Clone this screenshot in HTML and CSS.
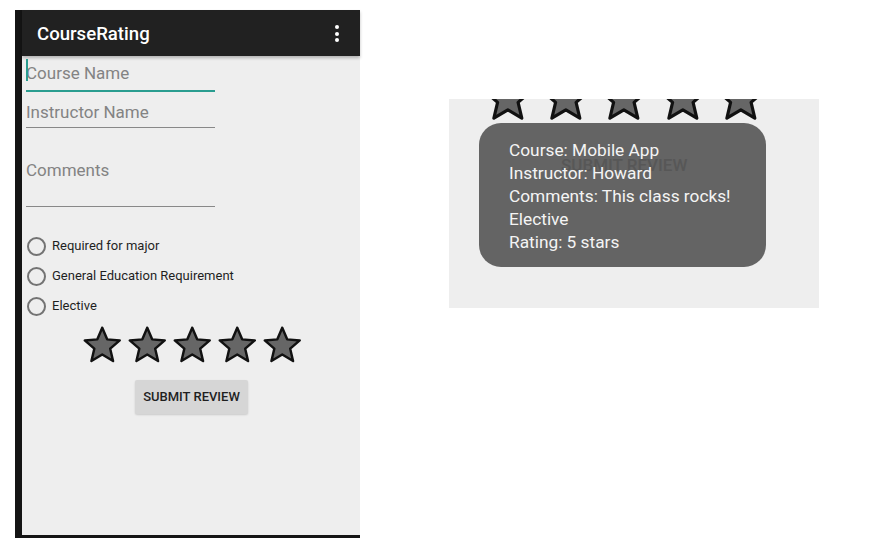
FILE: index.html
```html
<!DOCTYPE html>
<html lang="en">
<head>
  <meta charset="UTF-8" />
  <title>CourseRating</title>
  <link rel="stylesheet" href="styles.css">
</head>
<body>
  <div class="phone">
    <div class="appbar">
      <span class="app-title">CourseRating</span>
      <span class="kebab"><i></i><i></i><i></i></span>
    </div>
    <div class="content">
      <div class="field field-active"><span class="cursor"></span>Course Name</div>
      <div class="field field-second">Instructor Name</div>
      <div class="field field-comments">Comments</div>

      <div class="radios">
        <label class="radio"><span class="circle"></span>Required for major</label>
        <label class="radio"><span class="circle"></span>General Education Requirement</label>
        <label class="radio"><span class="circle"></span>Elective</label>
      </div>

      <div class="stars">
        <svg class="star" viewBox="1 1 22 21"><path d="M12 17.27L18.18 21l-1.64-7.03L22 9.24l-7.19-.61L12 2 9.19 8.63 2 9.24l5.46 4.73L5.82 21z"/></svg>
        <svg class="star" viewBox="1 1 22 21"><path d="M12 17.27L18.18 21l-1.64-7.03L22 9.24l-7.19-.61L12 2 9.19 8.63 2 9.24l5.46 4.73L5.82 21z"/></svg>
        <svg class="star" viewBox="1 1 22 21"><path d="M12 17.27L18.18 21l-1.64-7.03L22 9.24l-7.19-.61L12 2 9.19 8.63 2 9.24l5.46 4.73L5.82 21z"/></svg>
        <svg class="star" viewBox="1 1 22 21"><path d="M12 17.27L18.18 21l-1.64-7.03L22 9.24l-7.19-.61L12 2 9.19 8.63 2 9.24l5.46 4.73L5.82 21z"/></svg>
        <svg class="star" viewBox="1 1 22 21"><path d="M12 17.27L18.18 21l-1.64-7.03L22 9.24l-7.19-.61L12 2 9.19 8.63 2 9.24l5.46 4.73L5.82 21z"/></svg>
      </div>

      <div class="btn-row">
        <button class="submit-btn">SUBMIT REVIEW</button>
      </div>
    </div>
  </div>

  <div class="result">
    <div class="stars stars-big">
      <svg class="star" viewBox="1 1 22 21"><path d="M12 17.27L18.18 21l-1.64-7.03L22 9.24l-7.19-.61L12 2 9.19 8.63 2 9.24l5.46 4.73L5.82 21z"/></svg>
      <svg class="star" viewBox="1 1 22 21"><path d="M12 17.27L18.18 21l-1.64-7.03L22 9.24l-7.19-.61L12 2 9.19 8.63 2 9.24l5.46 4.73L5.82 21z"/></svg>
      <svg class="star" viewBox="1 1 22 21"><path d="M12 17.27L18.18 21l-1.64-7.03L22 9.24l-7.19-.61L12 2 9.19 8.63 2 9.24l5.46 4.73L5.82 21z"/></svg>
      <svg class="star" viewBox="1 1 22 21"><path d="M12 17.27L18.18 21l-1.64-7.03L22 9.24l-7.19-.61L12 2 9.19 8.63 2 9.24l5.46 4.73L5.82 21z"/></svg>
      <svg class="star" viewBox="1 1 22 21"><path d="M12 17.27L18.18 21l-1.64-7.03L22 9.24l-7.19-.61L12 2 9.19 8.63 2 9.24l5.46 4.73L5.82 21z"/></svg>
    </div>

    <div class="toast">
      <span class="ghost">SUBMIT REVIEW</span>
      <div class="toast-text">
        Course: Mobile App<br>
        Instructor: Howard<br>
        Comments: This class rocks!<br>
        Elective<br>
        Rating: 5 stars
      </div>
    </div>
  </div>
</body>
</html>
```

FILE: styles.css
```css
body {
  margin: 0;
  padding: 10px 0 0 15px;
  background: #ffffff;
  font-family: Roboto, "Liberation Sans", sans-serif;
  display: flex;
  align-items: flex-start;
}

.phone {
  width: 345px;
  height: 528px;
  box-sizing: border-box;
  border-left: 7px solid #141414;
  border-bottom: 3px solid #141414;
  background: #eeeeee;
  display: flex;
  flex-direction: column;
}

.appbar {
  height: 46px;
  flex-shrink: 0;
  background: #212121;
  display: flex;
  align-items: center;
  justify-content: space-between;
  padding: 0 21px 0 15px;
  box-shadow: 0 2px 3px rgba(0, 0, 0, 0.25);
  position: relative;
}

.app-title {
  color: #ffffff;
  font-size: 18.6px;
  font-weight: 500;
  margin-top: 2px;
}

.kebab {
  display: flex;
  flex-direction: column;
  gap: 2.5px;
  margin-top: 1px;
}

.kebab i {
  width: 4px;
  height: 4px;
  border-radius: 50%;
  background: #ffffff;
}

.content {
  flex: 1;
  padding-left: 4px;
}

.field {
  width: 189px;
  font-size: 17px;
  line-height: 20px;
  color: #838383;
  border-bottom: 1px solid #888888;
  position: relative;
}

.field-active {
  padding: 7px 0 7px;
  border-bottom: 2px solid #2a9d90;
}

.cursor {
  position: absolute;
  left: 0;
  top: 3px;
  width: 2px;
  height: 22px;
  background: #2a9d90;
}

.field-second {
  padding: 10px 0 5px;
}

.field-comments {
  padding: 32px 0 26px;
}

.radios {
  margin-top: 23px;
  display: flex;
  flex-direction: column;
}

.radio {
  height: 30px;
  display: flex;
  align-items: center;
  font-size: 13px;
  color: #1f1f1f;
}

.circle {
  width: 15px;
  height: 15px;
  border: 2px solid #737373;
  border-radius: 50%;
  margin: 2px 6px 0 1px;
}

.stars {
  display: flex;
  gap: 6.5px;
  padding-left: 57px;
  margin-top: 6px;
}

.star {
  width: 38.5px;
  height: 36.75px;
}

.star path {
  fill: #666666;
  stroke: #111111;
  stroke-width: 1.4;
  stroke-linejoin: round;
}

.btn-row {
  margin-top: 17px;
  padding-left: 109px;
}

.submit-btn {
  width: 113px;
  height: 34px;
  border: none;
  border-radius: 2px;
  background: #d6d6d6;
  box-shadow: 0 1px 2px rgba(0, 0, 0, 0.15);
  font-family: Roboto, sans-serif;
  font-size: 13px;
  font-weight: 500;
  color: #1f1f1f;
  padding: 0;
}

.result {
  width: 370px;
  height: 209px;
  margin: 89px 0 0 89px;
  background: #eeeeee;
  position: relative;
  overflow: hidden;
}

.stars-big {
  gap: 8.7px;
  padding-left: 33.5px;
  margin-top: -26px;
}

.stars-big .star {
  width: 49.7px;
  height: 47.5px;
}

.toast {
  position: absolute;
  left: 30px;
  top: 24px;
  width: 287px;
  height: 144px;
  box-sizing: border-box;
  padding: 16px 0 0 30px;
  background: #646464;
  border-radius: 22px;
}

.ghost {
  position: absolute;
  left: 82px;
  top: 32px;
  font-size: 17px;
  font-weight: 500;
  line-height: 20px;
  color: #575757;
}

.toast-text {
  position: relative;
  font-size: 17.3px;
  line-height: 23px;
  color: #f4f4f4;
}
```
